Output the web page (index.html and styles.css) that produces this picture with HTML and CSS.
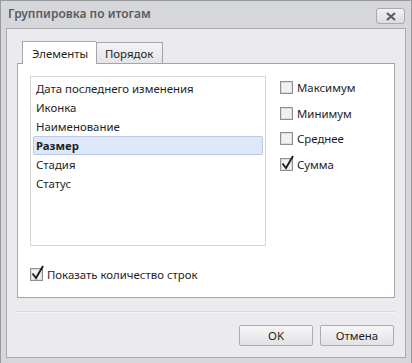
FILE: index.html
```html
<!DOCTYPE html>
<html lang="ru">
<head>
  <meta charset="UTF-8">
  <title>Группировка по итогам</title>
  <link rel="stylesheet" href="styles.css">
</head>
<body>
  <div class="window">
    <div class="titlebar">
      <span class="title">Группировка по итогам</span>
      <button class="close-btn" aria-label="Закрыть">
        <svg width="12" height="9" viewBox="0 0 12 9"><path d="M2 1 L10 8 M10 1 L2 8" stroke="#5c5c62" stroke-width="2.2" fill="none"/></svg>
      </button>
    </div>

    <div class="client">
      <div class="tabs">
        <div class="tab active">Элементы</div>
        <div class="tab">Порядок</div>
      </div>

      <div class="panel">
        <div class="panel-top">
          <ul class="listbox">
            <li>Дата последнего изменения</li>
            <li>Иконка</li>
            <li>Наименование</li>
            <li class="selected">Размер</li>
            <li>Стадия</li>
            <li>Статус</li>
          </ul>

          <div class="totals">
            <label class="check"><span class="box"></span>Максимум</label>
            <label class="check"><span class="box"></span>Минимум</label>
            <label class="check"><span class="box"></span>Среднее</label>
            <label class="check"><span class="box checked"><svg width="15" height="15" viewBox="0 0 15 15"><path d="M2.5 8.5 L6 13 L13 1" stroke="#1e1e22" stroke-width="1.9" fill="none"/></svg></span>Сумма</label>
          </div>
        </div>

        <label class="check show-count"><span class="box checked"><svg width="15" height="15" viewBox="0 0 15 15"><path d="M2.5 8.5 L6 13 L13 1" stroke="#1e1e22" stroke-width="1.9" fill="none"/></svg></span>Показать количество строк</label>
      </div>

      <div class="separator"></div>

      <div class="buttons">
        <button class="btn">OK</button>
        <button class="btn">Отмена</button>
      </div>
    </div>
  </div>
</body>
</html>
```

FILE: styles.css
```css
* {
  box-sizing: border-box;
}

body {
  margin: 0;
  font-family: "Noto Sans", "Open Sans", sans-serif;
  font-size: 11.4px;
  color: #1e1e1e;
  background: #d6d7db;
}

.window {
  width: 412px;
  height: 363px;
  background: #d6d7db;
  border: 1px solid #9a9ba0;
  border-bottom-width: 0;
  padding: 0 5px 5px 5px;
  display: flex;
  flex-direction: column;
}

.titlebar {
  height: 27px;
  display: flex;
  align-items: center;
  justify-content: space-between;
  padding: 0 1px 2px 2px;
}

.title {
  font-weight: 600;
  color: #5b5b60;
  font-size: 12px;
}

.close-btn {
  width: 29px;
  height: 16px;
  margin-top: 5px;
  border: 1px solid #a9aab0;
  border-radius: 3px;
  background: linear-gradient(#f2f2f4, #dcdde1);
  padding: 0;
  display: flex;
  align-items: center;
  justify-content: center;
}

.client {
  flex: 1;
  background: #eaeaef;
  border: 1px solid #a9aab0;
  padding: 12px 10px 0 10px;
  display: flex;
  flex-direction: column;
}

.tabs {
  display: flex;
  align-items: flex-end;
  padding-left: 5px;
  height: 23px;
  position: relative;
  z-index: 2;
  margin-bottom: -1px;
}

.tab {
  height: 21px;
  padding: 0 8px;
  border: 1px solid #a4a5ab;
  border-bottom: none;
  background: linear-gradient(#f4f4f7, #e4e4e9);
  display: flex;
  align-items: center;
  margin-bottom: 1px;
}

.tab.active {
  height: 23px;
  background: #fff;
  margin-bottom: 0;
  border-right: none;
  padding: 0 9px 0 9px;
  width: 74px;
}

.tab + .tab {
  width: 67px;
}

.panel {
  background: #fff;
  border: 1px solid #a4a5ab;
  height: 235px;
  padding: 12px 12px 0 12px;
}

.panel-top {
  display: flex;
  gap: 14px;
}

.listbox {
  list-style: none;
  margin: 0;
  width: 236px;
  height: 170px;
  border: 1px solid #d6d6da;
  padding: 2px 2px;
}

.listbox li {
  height: 19px;
  line-height: 19px;
  padding-left: 3px;
  white-space: nowrap;
}

.listbox li.selected {
  font-weight: 700;
  background: #dfe8f8;
  border: 1px solid #b9cae9;
  border-radius: 2px;
  line-height: 17px;
  padding-left: 2px;
}

.totals {
  display: flex;
  flex-direction: column;
  gap: 12.5px;
  padding-top: 5px;
}

.check {
  display: flex;
  align-items: center;
  gap: 4px;
  height: 13px;
  white-space: nowrap;
}

.box {
  width: 13px;
  height: 13px;
  border: 1px solid #8f9096;
  background: #f1f1f3;
  box-shadow: inset 0 0 0 1px #dcdce0;
  position: relative;
  flex: none;
}

.box.checked svg {
  position: absolute;
  left: -1px;
  top: -4px;
}

.show-count {
  margin-top: 22px;
}

.separator {
  margin-top: 13px;
  height: 2px;
  border-top: 1px solid #d8d8dd;
  border-bottom: 1px solid #f6f6f8;
}

.buttons {
  display: flex;
  justify-content: flex-end;
  gap: 7px;
  margin-top: 12px;
  padding-right: 1px;
}

.btn {
  width: 74px;
  height: 21px;
  border: 1px solid #acadb2;
  border-radius: 2px;
  background: linear-gradient(#f7f7f8, #e2e2e5);
  font-family: inherit;
  font-size: 11.4px;
  color: #1e1e1e;
  padding: 0;
}
```
